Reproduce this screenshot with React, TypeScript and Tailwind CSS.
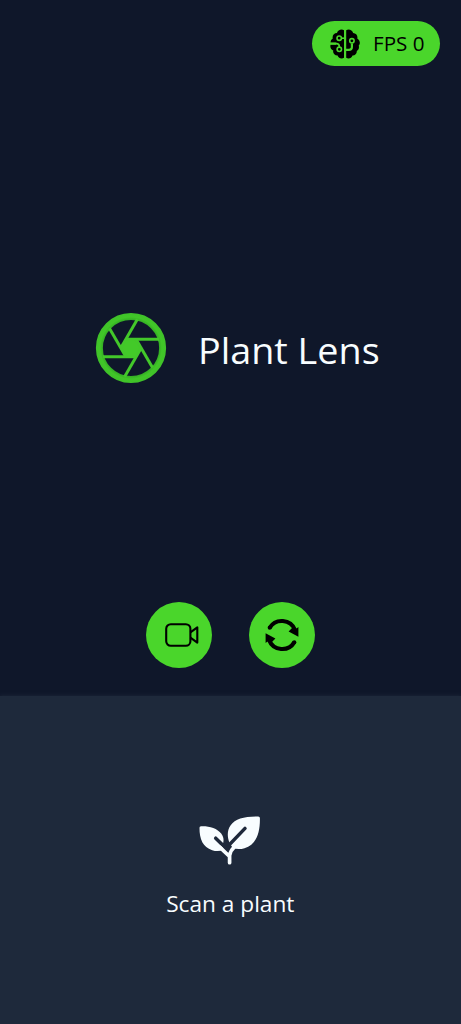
const ANGLES = [0, 60, 120, 180, 240, 300];

function BrainIcon() {
  return (
    <svg width="30" height="30" viewBox="0 0 30 30" className="block shrink-0">
      <path
        d="M14 1.2V28.8C12 30 8.5 29.6 7.6 26.5C4.5 26.6 2.5 24 3.3 21.4C.7 20.3-.2 17.7.6 15.7H6.3V13.4H.6C.5 11.8 1.4 10.2 2.8 9.4C2 6.5 4 4 7 3.9C7.7 1 11.5-.4 14 1.2Z"
        fill="#000"
      />
      <path
        d="M16.2 1.2C18.7-.4 22.4 1 23.1 3.9C26.1 4 28 6.5 27.3 9.4C30.3 11.3 30.5 15 28.7 16.6C29.5 19 28.5 21 26.8 21.9C27 24.7 25.1 26.6 22.5 26.5C21.6 29.6 18.2 30 16.2 28.8V22H19C21.5 22 23 20.4 23 18V14.5H20.8V18C20.8 19.2 20.2 19.7 19 19.7H16.2Z"
        fill="#000"
      />
      <g fill="none" stroke="#4ad62b" strokeWidth="1.6">
        <circle cx="9.2" cy="9.2" r="2.2" />
        <path d="M11.4 9.2H14" />
        <path d="M.5 14.6H6.5Q9.3 14.6 9.3 17.5V18" />
        <circle cx="9.3" cy="20.3" r="2.2" />
        <circle cx="21.9" cy="11.8" r="2.2" fill="#000" />
      </g>
    </svg>
  );
}

function ApertureIcon() {
  return (
    <svg width="72" height="72" viewBox="-36 -36 72 72" className="block shrink-0">
      <defs>
        <radialGradient id="ring" gradientUnits="userSpaceOnUse" cx="0" cy="0" r="35.2">
          <stop offset="0.8" stopColor="#34ae24" />
          <stop offset="0.88" stopColor="#41c628" />
          <stop offset="1" stopColor="#3fc229" />
        </radialGradient>
      </defs>
      <circle r="31.6" fill="none" stroke="url(#ring)" strokeWidth="7" />
      <path d="M-5-8.7H5L10 0L5 8.7H-5L-10 0Z" fill="#43ca29" />
      {ANGLES.map((angle) => (
        <path key={angle} d="M-5.4-8.8H28" transform={`rotate(${angle})`} stroke="#43c82a" strokeWidth="3" />
      ))}
    </svg>
  );
}

function VideoIcon() {
  return (
    <svg width="34" height="24" viewBox="0 0 34 24" className="block" fill="none" stroke="#000" strokeWidth="2.1" strokeLinejoin="round">
      <rect x="1.2" y="1.2" width="24.2" height="21.6" rx="4.6" />
      <path d="M25.4 9.3L32.3 4.4V19.6L25.4 14.7" />
    </svg>
  );
}

function RefreshIcon() {
  return (
    <svg width="34" height="34" viewBox="0 0 34 34" className="block">
      <g fill="none" stroke="#000" strokeWidth="4.1">
        <path d="M4.6 9.9A14.2 14.2 0 0 1 30 12" />
        <path d="M29.4 24.1A14.2 14.2 0 0 1 4 22" />
      </g>
      <circle cx="4.7" cy="9.7" r="2.05" fill="#000" />
      <circle cx="29.3" cy="24.3" r="2.05" fill="#000" />
      <path d="M33.4 9V18.7L23.6 13.6L27.5 9.5L31.5 10.5Z" fill="#000" />
      <path d="M.6 25V15.3L10.4 20.4L6.5 24.5L2.5 23.5Z" fill="#000" />
    </svg>
  );
}

function PlantIcon() {
  return (
    <svg width="62" height="50" viewBox="0 0 62 50" className="block">
      <g fill="#f8fdff">
        <path d="M.5 11.8Q.4 10.3 2 10.3C9 9.8 18.5 12.2 22.2 17.6C24.4 20.5 25 24 24.3 26.5L23 29.5L25 33.5Q19.5 36.2 13.2 34.2C4 31.5.3 23 .5 11.8Z" />
        <path d="M60.9 1.9Q60.9.4 59.2.4C45.5.3 36.4 2.5 31.5 9.4C28.1 14.2 28.1 20.8 30.4 26.4L33.7 32Q39.5 34 45.5 32.2C57 29 61.2 17 60.9 1.9Z" />
      </g>
      <path d="M16.7 22.2L28.8 34M46 12.4L30 29L28.8 34" stroke="#1e293b" strokeWidth="3.5" strokeLinecap="round" fill="none" />
      <path d="M20.7 31.2L30.6 40.5V46.7M30.6 43V39.5Q31.4 34.6 35.8 30.5" stroke="#f8fdff" strokeWidth="3.7" strokeLinecap="round" strokeLinejoin="round" fill="none" />
    </svg>
  );
}

export default function App() {
  return (
    <main className="flex h-[1024px] w-full flex-col overflow-hidden bg-[#0f172a] font-['Open_Sans',sans-serif]">
      <section className="flex h-[696px] shrink-0 flex-col">
        <header className="flex justify-end pt-[21px] pr-[21px]">
          <div className="flex h-[45px] w-[128px] items-center gap-[13px] rounded-full bg-[#4ad62b] pl-[18px] text-black">
            <BrainIcon />
            <span className="origin-left scale-x-[1.03] text-[20px] leading-none whitespace-nowrap">FPS 0</span>
          </div>
        </header>
        <div className="mt-[246px] flex h-[72px] items-center gap-[31px] pl-[95px]">
          <ApertureIcon />
          <h1 className="origin-left scale-x-[1.02] pt-[3px] text-[37px] leading-none font-normal whitespace-nowrap text-[#f8fdff]">Plant Lens</h1>
        </div>
        <div className="mt-[218px] flex gap-[37px] pl-[146px]">
          <button aria-label="Record" className="flex size-[66px] items-center justify-center rounded-full bg-[#4ad62b] pl-[6px]">
            <VideoIcon />
          </button>
          <button aria-label="Switch camera" className="flex size-[66px] items-center justify-center rounded-full bg-[#4ad62b]">
            <RefreshIcon />
          </button>
        </div>
      </section>
      <section className="flex flex-1 flex-col items-center bg-[#1e293b] pt-[120px] pr-[1px] shadow-[0_0_4px_#1e293b]">
        <PlantIcon />
        <p className="mt-[22px] scale-x-[1.03] text-[22px] leading-[30px] text-[#f8fdff]">Scan a plant</p>
      </section>
    </main>
  );
}
